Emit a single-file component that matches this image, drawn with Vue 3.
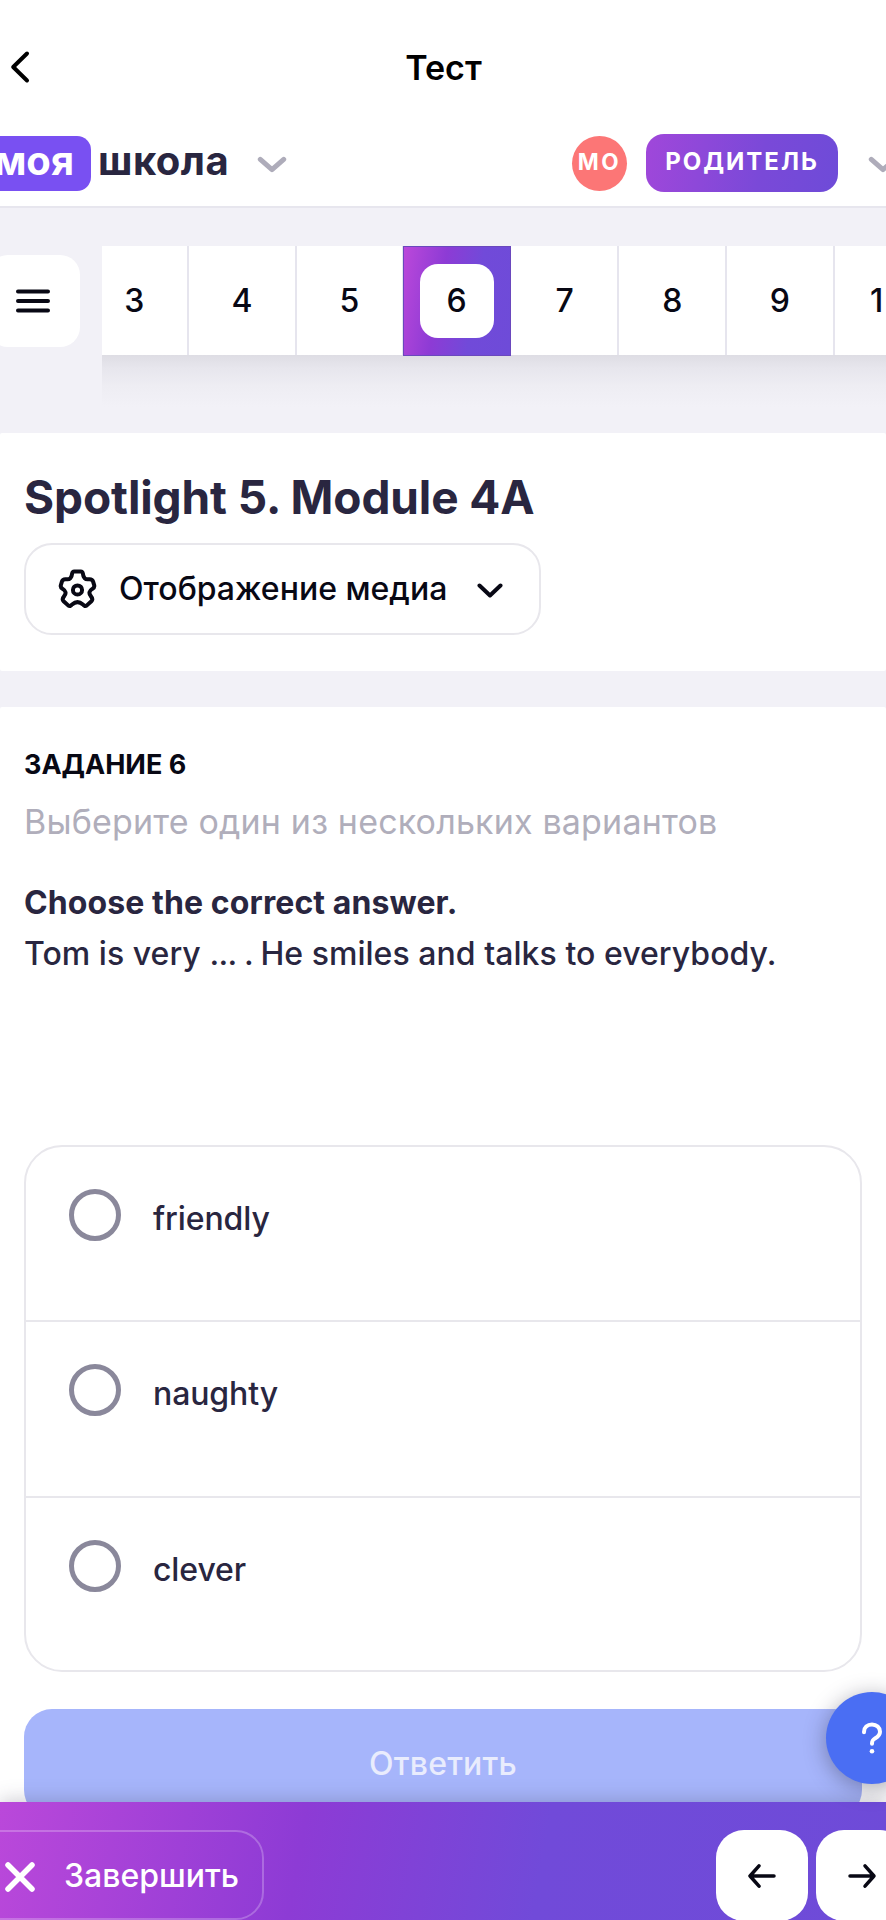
<script setup>
const questions = [3, 4, 5, 6, 7, 8, 9, 10]
const current = 6
const options = ['friendly', 'naughty', 'clever']
</script>

<template>
  <div class="page">
    <header class="titlebar">
      <svg class="back" width="20" height="34" viewBox="0 0 20 34"><path d="M17 3.500 3.200 17 17 30.500" /></svg>
      <h1>Тест</h1>
    </header>

    <div class="brandbar">
      <div class="brand">
        <span class="brand-pill">моя</span>
        <span class="brand-word">школа</span>
        <svg class="chev brand-chev" width="30" height="18" viewBox="0 0 30 18"><path d="M3.300 3.300 15 13.600 26.700 3.300" /></svg>
      </div>
      <div class="account">
        <span class="avatar">МО</span>
        <span class="role">РОДИТЕЛЬ</span>
        <svg class="chev role-chev" width="30" height="18" viewBox="0 0 30 18"><path d="M3.300 3.300 15 13.600 26.700 3.300" /></svg>
      </div>
    </div>

    <nav class="nav">
      <button class="menu">
        <svg width="36" height="24" viewBox="0 0 36 24"><path d="M3 2.500H33M3 12H33M3 21.500H33" /></svg>
      </button>
      <div class="strip-wrap">
        <div class="strip">
          <div v-for="q in questions" :key="q" class="cell" :class="{ active: q === current }">
            <span>{{ q }}</span>
          </div>
        </div>
        <div class="strip-shade"></div>
      </div>
    </nav>

    <section class="head">
      <h2>Spotlight 5. Module 4A</h2>
      <button class="media">
        <svg class="gear" width="39" height="40" viewBox="0 0 40 42">
          <path d="M16.500 2.500H23.500Q25.200 2.500 25.600 4.500Q26.300 11.500 31.500 10.800Q35.400 10.300 36.300 13L37.500 17Q38.200 19.500 35.500 20.900Q30.600 24 33.800 28.200Q36.800 31.800 34.600 33.800L29.800 38.200Q27.600 40 25.700 37.200Q20 32.400 14.300 37.200Q12.400 40 10.200 38.200L5.400 33.800Q3.200 31.800 6.200 28.200Q9.400 24 4.500 20.900Q1.800 19.500 2.500 17L3.700 13Q4.600 10.300 8.500 10.800Q13.700 11.500 14.400 4.500Q14.800 2.500 16.500 2.500Z" />
          <circle cx="20" cy="22" r="4.800" />
        </svg>
        <span class="media-label">Отображение медиа</span>
        <svg class="media-chev" width="26" height="16" viewBox="0 0 26 16"><path d="M2.500 2.500 13 12.500 23.500 2.500" /></svg>
      </button>
    </section>

    <section class="task">
      <h3>ЗАДАНИЕ 6</h3>
      <p class="hint">Выберите один из нескольких вариантов</p>
      <p class="lead">Choose the correct answer.</p>
      <p class="text">Tom is very <span class="gap">... . </span>He smiles and talks to everybody.</p>
      <ul class="options">
        <li v-for="o in options" :key="o"><i class="radio"></i><span>{{ o }}</span></li>
      </ul>
      <button class="answer"><span>Ответить</span></button>
    </section>

    <footer class="footer">
      <button class="finish">
        <svg width="32" height="32" viewBox="0 0 32 32"><path d="M4 4 28 28M28 4 4 28" /></svg>
        <span>Завершить</span>
      </button>
      <div class="arrows">
        <button><svg width="30" height="26" viewBox="0 0 30 26"><path d="M27 13H3M12 2.800 3 13 12 23.200" /></svg></button>
        <button><svg width="30" height="26" viewBox="0 0 30 26"><path d="M3 13H27M18 2.800 27 13 18 23.200" /></svg></button>
      </div>
    </footer>

    <button class="help">
      <svg width="24" height="34" viewBox="0 0 24 34">
        <path d="M4 11.200V11C4 6.500 7.400 3.500 12 3.500S20 6.700 20 10.700C20 14.200 17.800 15.700 15.300 17.200C13 18.600 12 19.300 12 22.700" />
        <circle cx="12" cy="30.300" r="2.300" />
      </svg>
    </button>
  </div>
</template>

<style>
body { margin: 0; background: #fff; }
</style>

<style scoped>
.page {
  position: relative;
  width: 886px;
  height: 1920px;
  overflow: hidden;
  box-sizing: border-box;
  background: #f2f1f7;
  font-family: Inter, "Liberation Sans", sans-serif;
  color: #292640;
}
.page *, .page *::before { box-sizing: border-box; }
button { border: 0; padding: 0; margin: 0; font: inherit; color: inherit; display: flex; align-items: center; }
h1, h2, h3, p, ul { margin: 0; padding: 0; }
span, h1, h2, h3, p { white-space: nowrap; }
svg { display: block; flex: none; fill: none; stroke: #080814; stroke-width: 4; stroke-linecap: round; stroke-linejoin: round; }

.titlebar { display: grid; align-items: center; height: 134px; background: #fff; }
.titlebar > * { grid-area: 1 / 1; }
.back { margin-left: 10px; stroke: #000; stroke-width: 4; }
h1 { justify-self: center; padding: 2px 0 0 1px; color: #000; font-size: 34px; font-weight: 600; line-height: 40px; }

.brandbar { display: flex; justify-content: space-between; height: 74px; background: #fff; border-bottom: 2px solid #e7e6ee; }
.brand { display: flex; align-items: center; height: 58px; }
.brand-pill {
  display: flex; align-items: center; justify-content: flex-end;
  width: 107px; height: 55px; margin: 1px 0 0 -16px; padding: 0 17px 6px 0;
  border-radius: 14px; background: #7950f2; color: #fff; font-size: 40px; font-weight: 700;
}
.brand-word { margin-left: 7px; padding-bottom: 6px; font-size: 40px; font-weight: 700; letter-spacing: 0.500px; }
.brand-chev { margin: 4px 0 0 28px; }
.chev { stroke: #aeacba; stroke-width: 5; }
.account { display: flex; align-items: center; height: 58px; margin-right: -12px; }
.avatar {
  display: flex; align-items: center; justify-content: center; width: 55px; height: 55px; padding-bottom: 4px;
  border-radius: 50%; background: #fc7676; color: #fff; font-size: 22.500px; font-weight: 700; letter-spacing: 2.500px;
}
.role {
  display: flex; align-items: center; justify-content: center; width: 192px; height: 58px; margin-left: 19px; padding: 0 0 3px 0;
  border-radius: 18px; background: linear-gradient(100deg, #a047da, #7a49d8 60%, #6e4bd8);
  color: #fff; font-size: 24px; font-weight: 700; letter-spacing: 2px;
}
.role-chev { margin: 4px 0 0 30px; }

.nav { display: flex; height: 225px; }
.menu { width: 92px; height: 92px; margin: 47px 22px 0 -12px; padding-left: 27px; border-radius: 20px; background: #fff; }
.strip-wrap { flex: 1; min-width: 0; padding-top: 38px; overflow: hidden; }
.strip { display: flex; width: 882px; height: 109px; margin-left: -20.500px; background: #fff; }
.strip-shade { height: 52px; background: linear-gradient(#dedde4, #e7e6ed 25%, #eeedf3 60%, #f2f1f7); }
.cell {
  display: flex; flex: none; align-items: center; justify-content: center; width: 107.600px; height: 109px;
  border-right: 2px solid #e6e5ee; color: #080814; font-size: 32px; font-weight: 500;
}
.cell:last-child { padding-left: 9px; letter-spacing: 5px; }
.cell.active {
  width: 108px; height: 110px; margin: 0 1.200px 0 -1.600px; border: 1px solid #6a48bd;
  background: linear-gradient(100deg, #bb48da, #8d3bd5 35%, #714ad9 65%, #6e4bd8);
}
.cell.active span { display: flex; align-items: center; justify-content: center; width: 74px; height: 74px; padding-bottom: 1px; border-radius: 18px; background: #fff; }

.head { height: 238px; padding: 36px 0 0 24px; border-radius: 2px; background: #fff; }
h2 { font-size: 46px; line-height: 56px; font-weight: 700; letter-spacing: -0.100px; }
.media {
  width: 517px; height: 92px; margin-top: 18px; padding-left: 32px;
  border: 2px solid #e8e7ec; border-radius: 28px; background: #fff; color: #080814;
}
.gear { stroke-width: 4.200; }
.media-label { margin-left: 22px; padding-bottom: 2px; font-size: 32px; font-weight: 500; }
.media-chev { margin: 4px 0 0 30px; }

.task { height: 1213px; margin-top: 36px; padding: 41px 24px 0; border-radius: 2px; background: #fff; }
h3 { font-size: 27px; line-height: 34px; font-weight: 700; color: #080814; }
.hint { margin-top: 19px; font-size: 34px; line-height: 42px; letter-spacing: 0.180px; color: #b0aebb; }
.lead { margin-top: 40px; font-size: 32px; line-height: 40px; font-weight: 700; letter-spacing: 0.100px; }
.text { margin-top: 11px; font-size: 32px; line-height: 40px; font-weight: 500; letter-spacing: 0.040px; }
.gap { letter-spacing: -0.700px; white-space: pre; }
.options { width: 838px; height: 527px; margin-top: 171px; border: 2px solid #e8e7ec; border-radius: 38px; list-style: none; }
.options li { display: flex; height: 175.400px; padding: 42px 0 0 43px; border-bottom: 2px solid #e8e7ec; }
.options li:last-child { border-bottom: 0; }
.radio { width: 52px; height: 52px; border: 5px solid #8a889b; border-radius: 50%; }
.options span { margin: 10px 0 0 32px; font-size: 32px; line-height: 40px; font-weight: 500; letter-spacing: -0.100px; }
.answer {
  justify-content: center; width: 838px; height: 109px; margin-top: 37px; padding-bottom: 1px; border-radius: 28px;
  background: #a6b5fb; color: #e9ecfd; font-size: 32px; font-weight: 500; letter-spacing: 0.200px;
}

.footer {
  position: absolute; left: 0; right: 0; bottom: 0; display: flex; justify-content: space-between;
  height: 118px; padding-top: 28px; background: linear-gradient(100deg, #ba48da 0, #8d3bd5 34%, #714ad9 61%, #6e4bd8);
  box-shadow: 0 -2px 18px rgba(60, 58, 80, 0.26);
}
.finish {
  width: 294px; height: 90px; margin-left: -30px; padding-left: 32px;
  border: 2px solid rgba(255, 255, 255, 0.24); border-radius: 28px; background: none; color: #fff; font-size: 32px; font-weight: 500;
}
.finish svg { stroke: #fff; stroke-width: 5.500; margin-top: 4px; }
.finish span { margin-left: 28px; }
.arrows { display: flex; gap: 8px; margin-right: -22px; }
.arrows button { justify-content: center; width: 92px; height: 91px; border-radius: 28px; background: #fff; }
.arrows svg { stroke-width: 3.500; }
.help {
  position: absolute; left: 826px; top: 1692px; justify-content: center; width: 92px; height: 92px;
  border-radius: 50%; background: #4a6ef3; box-shadow: 0 4px 22px rgba(40, 38, 60, 0.4);
}
.help svg { stroke: #fff; stroke-width: 4; }
.help circle { fill: #fff; stroke: none; }
</style>
